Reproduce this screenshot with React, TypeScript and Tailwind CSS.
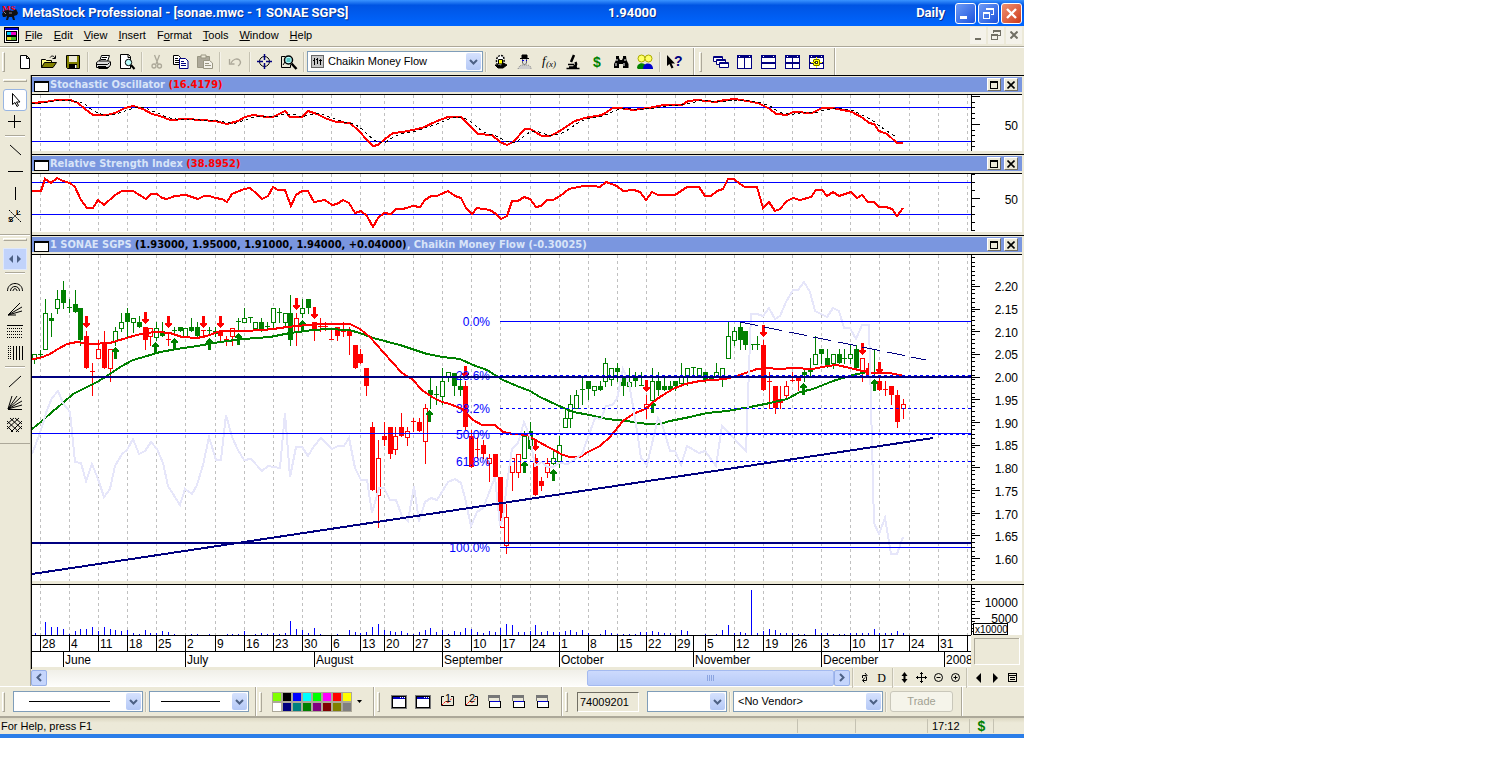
import type { ReactNode } from "react";

type Point = [number, number];
// x, high, body top, body bottom, low, kind (g/r hollow, G/R filled)
type Candle = [number, number, number, number, number, string];

const GRID = [
  40, 69, 98, 127, 156, 185, 215, 244, 273, 302, 331, 360, 384, 413, 442, 471, 500, 530, 559, 588, 617, 646, 675, 705,
  734, 763, 792, 821, 850, 879, 909, 938, 967,
];

const DAYS = [
  "28", "4", "11", "18", "25", "2", "9", "16", "23", "30", "6", "13", "20", "27", "3", "10", "17", "24", "1", "8", "15",
  "22", "29", "5", "12", "19", "26", "3", "10", "17", "24", "31",
];

const MONTHS: [number, string][] = [
  [63, "June"],
  [185, "July"],
  [314, "August"],
  [442, "September"],
  [559, "October"],
  [693, "November"],
  [821, "December"],
  [944, "2008"],
];

const STOCHASTIC: Point[] = [
  [32, 103], [45, 102], [57, 100], [70, 100], [78, 103], [85, 109], [93, 115], [107, 115], [115, 113], [125, 108],
  [133, 106], [143, 109], [152, 114], [160, 116], [170, 120], [187, 119], [200, 120], [215, 121], [227, 124],
  [238, 121], [245, 117], [253, 115], [267, 117], [273, 117], [285, 111], [290, 117], [302, 117], [308, 111],
  [317, 114], [327, 119], [337, 122], [350, 123], [359, 131], [367, 140], [373, 146], [378, 145], [385, 139],
  [393, 133], [403, 132], [422, 128], [437, 121], [448, 117], [461, 117], [472, 128], [478, 134], [492, 135],
  [500, 142], [507, 145], [513, 142], [525, 129], [530, 129], [542, 136], [550, 136], [558, 132], [575, 121],
  [585, 118], [590, 117], [602, 115], [613, 108], [620, 108], [633, 110], [648, 108], [664, 105], [682, 105],
  [688, 101], [698, 100], [715, 102], [725, 100], [735, 99], [747, 101], [758, 103], [770, 109], [776, 114],
  [787, 115], [793, 112], [812, 113], [822, 108], [833, 108], [852, 112], [863, 118], [869, 123], [874, 124],
  [879, 131], [887, 134], [897, 143], [903, 143],
];

const RSI: Point[] = [
  [32, 191], [41, 191], [45, 179], [51, 183], [57, 178], [63, 181], [70, 183], [75, 187], [81, 200], [87, 208],
  [93, 208], [98, 200], [104, 205], [115, 195], [122, 191], [133, 191], [146, 199], [151, 194], [157, 194],
  [162, 198], [167, 199], [175, 196], [186, 195], [198, 199], [204, 196], [210, 196], [215, 198], [222, 199],
  [227, 202], [232, 194], [244, 189], [250, 188], [257, 194], [262, 199], [268, 196], [273, 187], [278, 190],
  [285, 190], [291, 206], [296, 195], [302, 191], [308, 191], [314, 202], [325, 200], [332, 205], [337, 204],
  [343, 200], [349, 203], [355, 213], [361, 211], [367, 216], [373, 227], [378, 218], [384, 213], [391, 214],
  [396, 209], [403, 209], [413, 206], [420, 207], [425, 200], [431, 196], [437, 196], [448, 191], [455, 196],
  [461, 198], [466, 208], [472, 214], [477, 208], [490, 210], [496, 214], [501, 219], [507, 216], [512, 201],
  [518, 201], [524, 197], [530, 199], [536, 207], [541, 206], [547, 200], [553, 200], [560, 196], [569, 189],
  [583, 186], [594, 186], [600, 187], [606, 182], [617, 186], [623, 191], [634, 190], [640, 192], [646, 200],
  [652, 192], [658, 195], [675, 195], [681, 191], [687, 187], [699, 187], [705, 196], [711, 196], [717, 191],
  [723, 189], [728, 179], [734, 179], [740, 184], [745, 187], [757, 187], [763, 208], [769, 202], [775, 211],
  [780, 209], [787, 201], [793, 198], [800, 200], [811, 197], [816, 190], [822, 190], [827, 196], [833, 192],
  [839, 196], [851, 192], [857, 198], [862, 195], [868, 202], [874, 202], [879, 207], [886, 207], [892, 209],
  [897, 216], [903, 208],
];

const FAST_MA: Point[] = [
  [32, 359], [40, 358], [50, 354], [58, 349], [67, 344], [77, 342], [90, 344], [110, 343], [120, 340], [133, 336],
  [145, 333], [157, 332], [170, 333], [182, 337], [197, 338], [207, 336], [220, 331], [243, 331], [263, 330],
  [273, 329], [287, 327], [307, 325], [320, 324], [350, 324], [360, 329], [370, 337], [383, 352], [393, 363],
  [402, 373], [412, 379], [422, 390], [432, 397], [442, 402], [450, 404], [462, 409], [473, 420], [482, 425],
  [495, 425], [503, 432], [513, 434], [527, 435], [537, 441], [550, 448], [563, 455], [570, 457], [580, 457],
  [588, 452], [600, 446], [610, 437], [623, 421], [633, 414], [645, 409], [657, 399], [663, 395], [673, 389],
  [685, 384], [700, 381], [725, 379], [740, 375], [757, 369], [765, 368], [780, 369], [793, 368], [813, 369],
  [827, 366], [837, 365], [850, 368], [863, 371], [873, 373], [890, 373], [904, 376],
];

const SLOW_MA: Point[] = [
  [32, 429], [42, 421], [52, 412], [63, 403], [73, 394], [85, 388], [97, 382], [110, 374], [120, 367], [133, 360],
  [147, 356], [160, 352], [177, 349], [197, 346], [220, 342], [243, 339], [270, 337], [290, 333], [313, 330],
  [327, 329], [349, 330], [360, 333], [373, 338], [400, 345], [427, 354], [443, 357], [460, 359], [473, 365],
  [487, 370], [503, 380], [517, 386], [530, 391], [540, 397], [557, 405], [573, 412], [590, 415], [607, 419],
  [627, 421], [647, 424], [660, 424], [670, 421], [690, 417], [707, 413], [727, 411], [750, 407], [770, 403],
  [787, 399], [800, 392], [813, 389], [833, 381], [853, 375], [867, 372],
];

const MONEY_FLOW: Point[] = [
  [32, 454], [40, 433], [47, 410], [52, 398], [58, 391], [63, 403], [70, 412], [75, 462], [81, 463], [86, 481],
  [92, 464], [98, 479], [104, 497], [110, 489], [115, 466], [122, 454], [127, 450], [133, 439], [139, 454],
  [145, 451], [151, 442], [157, 449], [163, 463], [168, 486], [180, 505], [185, 489], [192, 494], [197, 485],
  [203, 465], [209, 437], [216, 460], [221, 460], [226, 415], [232, 437], [238, 450], [244, 460], [251, 459],
  [262, 471], [268, 466], [280, 468], [285, 413], [290, 477], [296, 447], [302, 447], [308, 456], [314, 446],
  [321, 438], [332, 449], [338, 446], [344, 446], [349, 438], [355, 468], [361, 480], [367, 480], [372, 513],
  [379, 488], [384, 488], [390, 500], [396, 500], [402, 516], [408, 521], [414, 486], [419, 522], [425, 502],
  [431, 498], [437, 500], [448, 482], [455, 479], [461, 483], [465, 498], [471, 526], [477, 512], [483, 508],
  [489, 493], [495, 477], [500, 526], [503, 517], [507, 483], [512, 449], [518, 443], [524, 422], [530, 437],
  [535, 466], [542, 462], [547, 467], [553, 467], [559, 463], [568, 464], [582, 454], [595, 418], [601, 419],
  [606, 406], [612, 405], [617, 399], [623, 369], [629, 383], [635, 418], [641, 458], [647, 465], [658, 418],
  [663, 427], [670, 451], [675, 451], [681, 465], [687, 446], [699, 453], [705, 451], [716, 466], [722, 426],
  [746, 451], [751, 314], [757, 314], [763, 316], [769, 308], [775, 319], [780, 316], [786, 302], [793, 290],
  [798, 290], [804, 282], [810, 292], [815, 311], [827, 317], [833, 308], [839, 311], [844, 328], [850, 328],
  [856, 339], [862, 325], [869, 325], [874, 523], [879, 534], [885, 518], [891, 554], [897, 554], [903, 537],
];

const CANDLES: Candle[] = [
  [34, 354, 354, 359, 363, "g"], [40, 350, 354, 354, 357, "g"], [45, 299, 313, 349, 349, "g"],
  [51, 313, 318, 321, 336, "G"], [57, 290, 299, 308, 313, "g"], [63, 281, 290, 303, 308, "G"],
  [69, 299, 307, 307, 312, "g"], [75, 290, 304, 312, 312, "G"], [80, 308, 308, 340, 345, "G"],
  [86, 331, 336, 368, 368, "R"], [92, 363, 371, 371, 395, "r"], [98, 340, 349, 358, 358, "r"],
  [104, 331, 344, 368, 368, "R"], [110, 349, 349, 368, 381, "r"], [115, 327, 331, 341, 345, "g"],
  [121, 313, 322, 328, 331, "g"], [127, 308, 313, 322, 336, "G"], [133, 318, 318, 322, 332, "g"],
  [139, 316, 322, 327, 327, "G"], [145, 327, 327, 340, 349, "R"], [150, 328, 328, 336, 345, "r"],
  [156, 322, 328, 337, 340, "g"], [162, 322, 331, 336, 336, "G"], [168, 333, 339, 339, 345, "r"],
  [174, 327, 330, 330, 333, "g"], [180, 327, 327, 331, 331, "G"], [185, 328, 328, 337, 337, "g"],
  [191, 318, 327, 331, 331, "G"], [197, 322, 327, 336, 336, "G"], [203, 330, 330, 330, 336, "r"],
  [209, 327, 330, 330, 333, "g"], [215, 327, 331, 334, 336, "G"], [220, 331, 331, 336, 340, "R"],
  [226, 336, 339, 339, 345, "r"], [232, 328, 328, 336, 345, "r"], [238, 318, 321, 321, 331, "g"],
  [244, 308, 318, 322, 322, "g"], [250, 317, 317, 317, 322, "g"], [255, 322, 322, 328, 328, "g"],
  [261, 318, 322, 329, 331, "G"], [267, 322, 326, 326, 329, "g"], [273, 308, 308, 322, 327, "g"],
  [279, 308, 312, 312, 322, "g"], [285, 313, 313, 322, 327, "g"], [290, 295, 313, 340, 345, "G"],
  [296, 313, 318, 331, 345, "r"], [302, 299, 308, 313, 317, "g"], [308, 299, 299, 308, 313, "G"],
  [314, 322, 322, 329, 340, "R"], [320, 318, 326, 326, 331, "r"], [325, 322, 326, 326, 330, "r"],
  [331, 330, 339, 339, 339, "r"], [337, 327, 327, 336, 340, "R"], [343, 322, 331, 331, 336, "r"],
  [349, 327, 331, 336, 354, "R"], [355, 345, 345, 368, 368, "R"], [360, 349, 354, 363, 363, "R"],
  [366, 368, 368, 386, 395, "R"], [372, 422, 427, 490, 490, "R"], [378, 440, 458, 495, 527, "r"],
  [384, 422, 436, 440, 445, "R"], [390, 427, 427, 454, 458, "R"], [395, 427, 436, 449, 454, "r"],
  [401, 413, 427, 436, 436, "R"], [407, 427, 431, 437, 445, "r"], [413, 418, 421, 421, 431, "r"],
  [419, 418, 422, 431, 431, "R"], [425, 404, 408, 441, 463, "r"], [430, 377, 390, 395, 408, "G"],
  [436, 386, 394, 394, 404, "g"], [442, 368, 381, 396, 404, "g"], [448, 372, 372, 377, 381, "g"],
  [454, 373, 373, 386, 395, "G"], [460, 377, 386, 390, 395, "G"], [465, 381, 386, 427, 430, "R"],
  [471, 430, 436, 467, 467, "R"], [477, 437, 449, 449, 458, "r"], [483, 440, 445, 454, 458, "R"],
  [489, 454, 458, 463, 481, "r"], [495, 454, 454, 477, 477, "R"], [502, 517, 517, 527, 527, "r"],
  [500, 477, 477, 517, 527, "R"], [506, 504, 517, 545, 553, "r"], [512, 458, 458, 472, 490, "r"],
  [518, 454, 454, 472, 477, "r"], [524, 431, 436, 458, 458, "g"], [530, 422, 431, 449, 449, "G"],
  [535, 454, 458, 495, 495, "R"], [541, 477, 481, 486, 490, "R"], [547, 458, 463, 472, 477, "r"],
  [553, 449, 458, 463, 467, "g"], [559, 436, 445, 461, 467, "g"], [565, 409, 418, 427, 427, "g"],
  [570, 395, 404, 418, 427, "g"], [576, 390, 395, 408, 408, "g"], [582, 378, 389, 389, 404, "g"],
  [588, 381, 381, 389, 399, "G"], [594, 386, 386, 390, 395, "g"], [600, 381, 386, 390, 390, "G"],
  [605, 358, 363, 381, 386, "g"], [611, 368, 368, 379, 385, "g"], [617, 363, 368, 372, 381, "G"],
  [623, 378, 378, 386, 395, "G"], [629, 368, 382, 386, 386, "g"], [635, 372, 377, 381, 386, "G"],
  [641, 372, 385, 385, 385, "g"], [646, 395, 404, 408, 418, "r"], [652, 368, 381, 400, 400, "g"],
  [658, 372, 381, 390, 395, "G"], [664, 377, 386, 390, 390, "G"], [670, 381, 386, 390, 391, "G"],
  [675, 381, 381, 386, 390, "G"], [681, 363, 377, 383, 386, "g"], [687, 368, 368, 376, 385, "g"],
  [693, 367, 367, 367, 376, "g"], [699, 368, 368, 375, 375, "g"], [705, 372, 372, 380, 382, "G"],
  [711, 376, 376, 379, 379, "G"], [716, 363, 372, 376, 376, "g"], [722, 368, 368, 378, 386, "g"],
  [728, 322, 336, 358, 358, "g"], [734, 327, 331, 340, 345, "g"], [740, 322, 327, 340, 349, "G"],
  [745, 331, 331, 345, 349, "G"], [752, 344, 344, 344, 349, "g"], [757, 336, 344, 344, 349, "g"],
  [763, 340, 345, 390, 390, "R"], [769, 372, 381, 381, 408, "r"], [775, 386, 386, 408, 413, "R"],
  [780, 386, 399, 403, 408, "R"], [786, 381, 386, 395, 398, "r"], [792, 372, 380, 380, 381, "r"],
  [798, 377, 377, 381, 390, "R"], [804, 370, 372, 375, 381, "G"], [810, 358, 370, 372, 376, "G"],
  [815, 336, 354, 364, 364, "g"], [821, 349, 349, 354, 363, "G"], [827, 349, 358, 367, 367, "G"],
  [833, 354, 354, 363, 368, "g"], [839, 349, 354, 363, 363, "G"], [844, 349, 358, 358, 363, "g"],
  [850, 345, 354, 358, 363, "g"], [856, 345, 349, 368, 368, "G"], [862, 358, 358, 372, 381, "r"],
  [868, 363, 368, 377, 377, "R"], [874, 350, 377, 377, 377, "g"], [879, 377, 381, 390, 390, "R"],
  [885, 381, 389, 389, 395, "r"], [891, 386, 386, 395, 404, "R"], [897, 390, 395, 422, 427, "R"],
  [903, 399, 404, 408, 418, "r"],
];

const SELLS: Point[] = [
  [86, 316], [145, 312], [168, 316], [203, 316], [220, 316], [296, 298], [314, 307], [465, 366], [535, 439],
  [646, 380], [763, 325], [862, 343], [879, 362],
];

const BUYS: Point[] = [
  [115, 347], [155, 342], [174, 338], [209, 338], [238, 333], [302, 320], [429, 410], [524, 461], [553, 469],
  [652, 401], [803, 383], [874, 379],
];

const VOLUME: Point[] = [
  [35, 2], [45, 13], [51, 8], [57, 8], [63, 6], [69, 1], [75, 4], [80, 6], [86, 6], [92, 8], [98, 4], [104, 8],
  [110, 6], [115, 5], [121, 4], [127, 5], [133, 2], [139, 1], [145, 5], [150, 2], [156, 2], [162, 4], [168, 3],
  [174, 1], [191, 1], [197, 1], [209, 1], [227, 1], [232, 1], [238, 1], [244, 4], [255, 1], [261, 2], [267, 1],
  [273, 2], [279, 1], [285, 2], [290, 14], [296, 6], [302, 5], [308, 2], [314, 7], [320, 1], [337, 1], [349, 5],
  [355, 3], [360, 2], [366, 3], [372, 8], [378, 11], [384, 5], [390, 4], [395, 3], [401, 4], [407, 2], [413, 1],
  [419, 3], [425, 5], [430, 7], [436, 3], [442, 5], [448, 1], [454, 4], [460, 3], [465, 7], [471, 6], [477, 3],
  [483, 2], [489, 4], [495, 3], [500, 7], [506, 11], [512, 10], [518, 3], [524, 3], [530, 4], [535, 10], [541, 3],
  [547, 4], [553, 3], [559, 3], [565, 4], [570, 5], [576, 3], [582, 5], [588, 2], [600, 1], [605, 5], [611, 2],
  [617, 1], [623, 1], [629, 1], [635, 1], [640, 3], [646, 3], [652, 4], [658, 3], [664, 2], [670, 2], [681, 5],
  [687, 4], [705, 1], [716, 1], [722, 5], [728, 10], [734, 2], [740, 3], [745, 2], [751, 45], [757, 2], [763, 4],
  [769, 6], [775, 5], [780, 2], [786, 2], [792, 2], [798, 1], [804, 1], [815, 6], [821, 2], [827, 2], [833, 1],
  [839, 1], [844, 1], [850, 2], [856, 2], [862, 2], [868, 2], [874, 6], [879, 2], [885, 2], [891, 2], [897, 4],
  [903, 2],
];

const FIB: [number, string, boolean][] = [
  [321, "0.0%", false],
  [375, "23.6%", true],
  [408, "38.2%", true],
  [434, "50.0%", true],
  [461, "61.8%", true],
  [547, "100.0%", false],
];

const PALETTE = [
  "bg-[#80ff00]", "bg-black", "bg-[#0000ff]", "bg-[#00ffff]", "bg-[#00ff00]", "bg-[#ff00ff]", "bg-[#ff0000]",
  "bg-[#ffff00]", "bg-white", "bg-[#000080]", "bg-[#008080]", "bg-[#008000]", "bg-[#800080]", "bg-[#800000]",
  "bg-[#808000]", "bg-[#808080]",
];

const join = (points: Point[]) => points.map((p) => p.join(",")).join(" ");

const valueAt = (points: Point[], x: number) => {
  const i = points.findIndex((p) => p[0] >= x);
  if (i <= 0) return points[0][1];
  const [x0, y0] = points[i - 1];
  const [x1, y1] = points[i];
  return y0 + ((y1 - y0) * (x - x0)) / (x1 - x0);
};

// three-period average, drawn as the dashed %D line
const signalLine = (points: Point[]): Point[] => {
  const out: Point[] = [];
  for (let x = 32; x <= 901; x += 6) {
    out.push([x, Math.round((valueAt(points, x) + valueAt(points, x - 6) + valueAt(points, x - 12)) / 3)]);
  }
  return out;
};

function Plot({ top, height, className, children }: { top: number; height: number; className: string; children: ReactNode }) {
  return (
    <svg
      viewBox={`32 ${top} 990 ${height}`}
      preserveAspectRatio="none"
      shapeRendering="crispEdges"
      className={`block w-full bg-white text-[12px] ${className}`}
    >
      {children}
    </svg>
  );
}

function Grid({ top, bottom }: { top: number; bottom: number }) {
  return (
    <g stroke="#c0c0c0" strokeDasharray="3 3">
      {GRID.map((x) => (
        <line key={x} x1={x + 0.5} x2={x + 0.5} y1={top} y2={bottom} />
      ))}
    </g>
  );
}

function Scale({ top, bottom, major, minor }: { top: number; bottom: number; major: number[]; minor: number[] }) {
  return (
    <g fill="#000">
      <rect x="971" y={top} width="1" height={bottom - top} />
      {minor.map((y) => (
        <rect key={y} x="972" y={y} width="3" height="1" />
      ))}
      {major.map((y) => (
        <rect key={y} x="972" y={y} width="8" height="1" />
      ))}
    </g>
  );
}

function Panel({ title, children }: { title: ReactNode; children: ReactNode }) {
  return (
    <section className="border-t border-l border-black bg-[#ece9d8] pr-0.5 pb-[3px]">
      <header className="flex h-[19px] items-start border-b border-black">
        <div className="flex h-[17px] w-full items-center border-y border-[#ece9d8] bg-[#7a96df] pr-1 pl-0.5">
          <span className="mt-1 h-[11px] w-[15px] shrink-0 border border-t-2 border-black bg-white" />
          <h2 className="ml-px grow truncate text-[11px] leading-[15px] font-bold text-[#d8e4f8] font-['DejaVu_Sans_Condensed','DejaVu_Sans',sans-serif]">
            {title}
          </h2>
          <button
            aria-label="Maximize panel"
            className="mr-[3px] flex h-[13px] w-3.5 items-center justify-center border border-t-white border-l-white border-[#716f64] bg-[#ece9d8]"
          >
            <span className="h-2 w-2 border border-t-2 border-black" />
          </button>
          <button
            aria-label="Close panel"
            className="flex h-[13px] w-3.5 items-center justify-center border border-t-white border-l-white border-[#716f64] bg-[#ece9d8]"
          >
            <svg viewBox="0 0 8 8" className="h-2 w-2" stroke="#000" strokeWidth="1.6">
              <path d="M0.5 0.5l7 7M7.5 0.5l-7 7" />
            </svg>
          </button>
        </div>
      </header>
      {children}
    </section>
  );
}

function StochasticChart() {
  return (
    <Plot top={95} height={56} className="h-14">
      <Grid top={95} bottom={151} />
      <rect x="32" y="107" width="939" height="1" fill="#00f" />
      <rect x="32" y="141" width="939" height="1" fill="#00f" />
      <polyline points={join(STOCHASTIC)} fill="none" stroke="#f00" strokeWidth="2" />
      <polyline points={join(signalLine(STOCHASTIC))} fill="none" stroke="#000" strokeDasharray="3 3" />
      <Scale top={95} bottom={151} major={[96, 124]} minor={[102, 107, 113, 118, 130, 135, 141, 146]} />
      <text x="1018" y="130" textAnchor="end">50</text>
    </Plot>
  );
}

function RsiChart() {
  return (
    <Plot top={174} height={58} className="h-[58px]">
      <Grid top={174} bottom={231} />
      <rect x="32" y="182" width="939" height="1" fill="#00f" />
      <rect x="32" y="214" width="939" height="1" fill="#00f" />
      <polyline points={join(RSI)} fill="none" stroke="#f00" strokeWidth="2" />
      <Scale top={174} bottom={231} major={[198]} minor={[174, 182, 190, 206, 214, 222, 230]} />
      <text x="1018" y="204" textAnchor="end">50</text>
    </Plot>
  );
}

function CandleMark({ data: [x, high, top, bottom, low, kind] }: { data: Candle }) {
  const color = kind.toLowerCase() === "g" ? "#008000" : "#f00";
  if (top === bottom) {
    return (
      <g fill={color}>
        <rect x={x} y={high} width="1" height={low - high + 1} />
        <rect x={x - 2} y={top} width="5" height="1" />
      </g>
    );
  }
  return (
    <g fill={color}>
      <rect x={x} y={high} width="1" height={low - high + 1} />
      {kind === kind.toUpperCase() ? (
        <rect x={x - 2} y={top} width="5" height={bottom - top} />
      ) : (
        <rect x={x - 1.5} y={top + 0.5} width="4" height={bottom - top} fill="#fff" stroke={color} />
      )}
    </g>
  );
}

function PriceChart() {
  const ticks = Array.from({ length: 72 }, (_, i) => Math.round(257 + i * 4.53)).filter((y) => y < 580);
  const labels = Array.from({ length: 13 }, (_, i) => i);
  return (
    <Plot top={255} height={326} className="h-[326px]">
      <Grid top={255} bottom={581} />
      {CANDLES.map((c) => (
        <CandleMark key={c[0]} data={c} />
      ))}
      {SELLS.map(([x, y]) => (
        <path key={x} d={`M${x - 1} ${y}h3v7h2v1l-3.5 4l-3.5 -4v-1h2z`} fill="#f00" />
      ))}
      {BUYS.map(([x, y]) => (
        <path key={x} d={`M${x - 1} ${y + 12}h3v-7h2v-1l-3.5 -4l-3.5 4v1h2z`} fill="#008000" />
      ))}
      {FIB.map(([y, label]) => (
        <text key={label} x="490" y={y + 5} textAnchor="end" fill="#00f">
          {label}
        </text>
      ))}
      <g fill="none" strokeWidth="2">
        <polyline points={join(SLOW_MA)} stroke="#008000" />
        <polyline points={join(FAST_MA)} stroke="#f00" />
        <polyline points={join(MONEY_FLOW)} stroke="#e6e6fa" />
      </g>
      {FIB.map(([y, label, dashed]) => (
        <line key={label} x1="500" x2="971" y1={y + 0.5} y2={y + 0.5} stroke="#00f" strokeDasharray={dashed ? "3 3" : undefined} />
      ))}
      <rect x="32" y="433" width="939" height="1" fill="#00f" />
      <rect x="32" y="376" width="939" height="2" fill="#000080" />
      <rect x="32" y="542" width="939" height="2" fill="#000080" />
      <line x1="32" y1="574" x2="933" y2="438" stroke="#000080" strokeWidth="2" />
      <line x1="740" y1="322" x2="926" y2="360" stroke="#000080" strokeDasharray="18 7" />
      <Scale top={255} bottom={581} major={labels.map((i) => Math.round(286 + i * 22.67))} minor={ticks} />
      {labels.map((i) => (
        <text key={i} x="1018" y={Math.round(291 + i * 22.75)} textAnchor="end">
          {(2.2 - i * 0.05).toFixed(2)}
        </text>
      ))}
    </Plot>
  );
}

function VolumeChart() {
  return (
    <Plot top={585} height={84} className="h-[84px]">
      <Grid top={585} bottom={635} />
      {VOLUME.map(([x, h]) => (
        <rect key={x} x={x} y={635 - h} width="1" height={h} fill="#00f" />
      ))}
      <Scale top={585} bottom={635} major={[601, 618]} minor={[588, 591, 594, 598, 604, 608, 611, 614, 621, 624, 628, 631]} />
      <text x="1018" y="607" textAnchor="end">10000</text>
      <text x="1018" y="623" textAnchor="end">5000</text>
      <rect x="973.5" y="623.5" width="34" height="11" fill="#fff" stroke="#000" />
      <text x="975" y="633" className="text-[10px]">x10000</text>
      <rect x="32" y="635" width="940" height="1" />
      <rect x="32" y="651" width="940" height="1" />
      {DAYS.map((day, i) => (
        <g key={GRID[i]}>
          <rect x={GRID[i]} y="636" width="1" height="15" />
          <text x={GRID[i] + 2} y="648">{day}</text>
        </g>
      ))}
      <rect x="967" y="636" width="1" height="15" />
      <rect x="693" y="636" width="1" height="15" />
      {MONTHS.map(([x, label]) => (
        <g key={label}>
          <rect x={x} y="652" width="1" height="15" />
          <text x={x + 2} y="664">{label}</text>
        </g>
      ))}
      <rect x="32" y="667" width="990" height="2" fill="#ece9d8" />
      <rect x="971" y="635" width="51" height="34" fill="#ece9d8" />
      <path d="M974.5 664V638.5H1019" fill="none" stroke="#aca899" />
      <path d="M974.5 664.5H1019.5V638" fill="none" stroke="#fff" />
    </Plot>
  );
}

function Icon({ children }: { children: ReactNode }) {
  return (
    <svg viewBox="0 0 16 16" className="h-4 w-4 overflow-visible" fill="none" stroke="#000" aria-hidden="true">
      {children}
    </svg>
  );
}

function ToolButton({ label, children }: { label: string; children: ReactNode }) {
  return (
    <button aria-label={label} className="flex h-[22px] w-6 shrink-0 items-center justify-center">
      <Icon>{children}</Icon>
    </button>
  );
}

const Sep = () => <span className="mx-[2px] h-5 w-0.5 shrink-0 border-l border-[#c5c2b2] bg-[#f5f3ea]" />;
const HSep = () => <span className="my-0.5 h-0.5 w-5 border-t border-[#aca899] bg-white" />;
const Grip = () => <span className="h-5 w-[3px] shrink-0 border border-[#aca899] border-t-white border-l-white" />;
const Edge = () => <span className="h-full w-0.5 shrink-0 border-l border-[#aca899] bg-white" />;

function ComboArrow() {
  return (
    <span className="pointer-events-none absolute inset-y-0.5 right-0.5 flex w-[15px] items-center justify-center rounded-xs bg-linear-to-b from-[#d6e2fd] to-[#b4c8f6]">
      <svg viewBox="0 0 9 6" className="h-1.5 w-[9px]" fill="none" stroke="#4d6185" strokeWidth="2">
        <path d="M1 1l3.5 3.5L8 1" />
      </svg>
    </span>
  );
}

function Combo({ label, value, className, children }: { label: string; value?: string; className: string; children?: ReactNode }) {
  return (
    <span className={`relative h-[21px] shrink-0 ${className}`}>
      <select aria-label={label} className="h-full w-full appearance-none border border-[#7f9db9] bg-white pl-1 text-[11px] text-black">
        <option>{value}</option>
      </select>
      {children}
      <ComboArrow />
    </span>
  );
}

const WindowIcon = ({ children }: { children?: ReactNode }) => (
  <g stroke="none" shapeRendering="crispEdges">
    <path d="M0 1h15v14h-15z" fill="#000080" />
    <path d="M1 4h13v10h-13z" fill="#fff" />
    <path d="M2 2h1v1h-1zM12 2h1v1h-1z" fill="#fff" />
    {children}
  </g>
);

function TitleBar() {
  return (
    <header className="flex h-[26px] items-center gap-0.5 bg-linear-to-b from-[#3a93ff] via-[#0054e3] via-20% to-[#0066ff] pr-0.5 pl-0.5 font-bold text-white font-[Roboto,sans-serif]">
      <svg viewBox="0 0 16 16" className="h-4 w-4 shrink-0" aria-hidden="true">
        <text x="0" y="7" fill="#f00" className="text-[9px] font-bold font-['Liberation_Serif',serif]">MS</text>
        <path d="M0 9l2-3 3-1 6 1 3-2 2 4-1 2-3 1 1 4h-2l-1-3-3 0-1 3-2 0 1-4-2 1-2 0z" fill="#111" />
        <path d="M2 7l2 2M7 8h3" stroke="#888" />
      </svg>
      <h1 className="w-[586px] shrink text-[13px] leading-4 whitespace-nowrap [text-shadow:1px_1px_#0a2f8a]">
        <span className="ml-0.5">MetaStock Professional - [sonae.mwc - 1 SONAE SGPS]</span>
      </h1>
      <span className="text-[13px] leading-4 [text-shadow:1px_1px_#0a2f8a]">1.94000</span>
      <span className="ml-auto pr-2 text-[13px] leading-4 [text-shadow:1px_1px_#0a2f8a]">Daily</span>
      <button aria-label="Minimize" className="h-[21px] w-[21px] rounded-[3px] border border-white bg-linear-to-br from-[#6f9bf5] to-[#1c50dc]">
        <svg viewBox="0 0 19 19" className="h-full w-full"><path d="M4 12h7v3H4z" fill="#fff" /></svg>
      </button>
      <button aria-label="Restore" className="h-[21px] w-[21px] rounded-[3px] border border-white bg-linear-to-br from-[#6f9bf5] to-[#1c50dc]">
        <svg viewBox="0 0 19 19" className="h-full w-full" fill="none" stroke="#fff" shapeRendering="crispEdges">
          <path d="M7.5 6V4.5h7v6H12M7 5h8M4.5 8.5h6v6h-6zM4 9h7" />
        </svg>
      </button>
      <button aria-label="Close" className="h-[21px] w-[21px] rounded-[3px] border border-white bg-linear-to-br from-[#f09070] to-[#cc3714]">
        <svg viewBox="0 0 19 19" className="h-full w-full" stroke="#fff" strokeWidth="2.4"><path d="M5 5l9 9M14 5l-9 9" /></svg>
      </button>
    </header>
  );
}

function MenuBar() {
  return (
    <nav className="flex h-[21px] items-center gap-[11px] border-b border-[#aca899] pr-0.5 pb-0.5 pl-1">
      <svg viewBox="0 0 15 16" className="-mr-[5px] h-4 w-[15px] shrink-0" shapeRendering="crispEdges" aria-hidden="true">
        <path d="M0 0h15v16H0z" />
        <path d="M1 1h13v2H1z" fill="#00c" />
        <path d="M1 3h13v12H1z" fill="#fff" />
        <path d="M2 4h11v10H2z" />
        <path d="M3 5h4v3H3z" fill="#0cf" />
        <path d="M7 5h5v3H7z" fill="#e0c" />
        <path d="M3 10h4v3H3z" fill="#dd2" />
        <path d="M7 10h5v3H7z" fill="#4b2" />
      </svg>
      {["File", "Edit", "View", "Insert", "Format", "Tools", "Window", "Help"].map((item) => {
        const at = item === "Format" ? 1 : 0;
        return (
          <button key={item} className="text-[11px] leading-4">
            {item.slice(0, at)}
            <u>{item[at]}</u>
            {item.slice(at + 1)}
          </button>
        );
      })}
      <div className="ml-auto flex gap-0.5">
        <button aria-label="Minimize chart" className="flex h-[17px] w-4 items-end justify-center bg-[#f4f2ea] pb-1">
          <span className="h-0.5 w-1.5 bg-[#716f64]" />
        </button>
        <button aria-label="Restore chart" className="flex h-[17px] w-4 items-center justify-center bg-[#f4f2ea]">
          <svg viewBox="0 0 10 10" className="h-2.5 w-2.5" fill="none" stroke="#716f64" shapeRendering="crispEdges">
            <path d="M2.5 3V0.5h7v5H7M2 1.5h8M0.5 4.5h6v5h-6zM0 5.5h7" />
          </svg>
        </button>
        <button aria-label="Close chart" className="flex h-[17px] w-4 items-center justify-center bg-[#f4f2ea]">
          <svg viewBox="0 0 8 8" className="h-2 w-2" stroke="#716f64" strokeWidth="2"><path d="M0.5 0.5l7 7M7.5 0.5l-7 7" /></svg>
        </button>
      </div>
    </nav>
  );
}

function MainToolbar() {
  return (
    <div className="flex h-7 items-center border-t border-white">
      <span className="w-0.5" />
      <Grip />
      <span className="w-2 shrink-0" />
      <ToolButton label="New">
        <path d="M3.5 1.5h6l3 3v10h-9zM9.5 1.5v3h3" fill="#fff" />
      </ToolButton>
      <ToolButton label="Open">
        <path d="M0.500 13.500v-8h4l1 1h5v2" fill="#ff8" />
        <path d="M0.500 13.500l3-5h12l-3.500 5z" fill="#808000" />
        <path d="M9 3.500c1.500-2 3.500-2 5 0.500M14.500 1.500v3h-3" />
      </ToolButton>
      <ToolButton label="Save">
        <path d="M1.500 1.500h13v13h-12l-1-1z" fill="#808000" />
        <path d="M4 2h8v6H4z" fill="#ece9d8" stroke="none" />
        <path d="M4 10h8v4H4z" fill="#000" stroke="none" />
        <path d="M10 11h1.500v3H10z" fill="#fff" stroke="none" />
      </ToolButton>
      <Sep />
      <ToolButton label="Print">
        <path d="M4.500 7.500l2-6h8l-2 6M7 3.500h5M6 5.500h5" fill="#fff" />
        <path d="M1.500 8.500l2-1.500h11l1 1v3l-2 2.500h-12z" fill="#ddd" />
        <path d="M1.500 10.500h11l2-2M3.500 14.500h9l1.500-2M3 12.500h8" />
      </ToolButton>
      <ToolButton label="Print preview">
        <path d="M1.500 0.500h8l2 2v12h-10zM9 0.500v3h3" fill="#fff" />
        <circle cx="9.500" cy="8.500" r="3.200" fill="#bff" />
        <path d="M12 11l3.500 4" strokeWidth="2" />
      </ToolButton>
      <Sep />
      <ToolButton label="Cut">
        <g stroke="#aca899" strokeWidth="1.300">
          <path d="M5.500 1l3.500 9M10.500 1l-3.500 9" />
          <circle cx="5" cy="12" r="2" />
          <circle cx="10.500" cy="12" r="2" />
        </g>
      </ToolButton>
      <ToolButton label="Copy">
        <path d="M0.500 1.500h5l2 2v7h-7z" fill="#fff" />
        <path d="M2 4.500h3M2 6.500h4M2 8.500h4" />
        <path d="M6.500 4.500h6l2.500 2.500v7.500h-8.500z" fill="#fff" stroke="#000080" />
        <path d="M8 7.500h3M8 9.500h5M8 11.500h5" stroke="#000080" />
      </ToolButton>
      <ToolButton label="Paste">
        <path d="M0.500 2.500h12v11h-12z" fill="#aca899" stroke="#999683" />
        <path d="M4 1h5v3H4z" fill="#ece9d8" stroke="#999683" />
        <path d="M6.500 6.500h6l3 2.500v5.500h-9z" fill="#f4f2ea" stroke="#999683" />
        <path d="M8 9.500h4M8 11.500h6" stroke="#999683" />
      </ToolButton>
      <Sep />
      <ToolButton label="Undo">
        <path d="M4 9c2-4 6-5 8.500-3 2 2.500 0.500 5-1.500 6M2.500 5v5h5" stroke="#aca899" strokeWidth="1.300" />
      </ToolButton>
      <Sep />
      <ToolButton label="Crosshair">
        <circle cx="7.500" cy="7.500" r="5" />
        <path d="M7.500 0v6M7.500 9v6M0 7.500h6M9 7.500h6" stroke="#000080" strokeWidth="1.500" />
      </ToolButton>
      <ToolButton label="Zoom in">
        <path d="M0.500 2.500h4M0.500 13.500h9v-3M0.500 2.500v11M2 11l2-3" />
        <circle cx="7.500" cy="6" r="4" fill="#bff" strokeWidth="1.500" />
        <path d="M5.500 5h4M5.500 7h4" stroke="#088" />
        <path d="M10.500 9.500l5 5.500" strokeWidth="2.500" />
      </ToolButton>
      <Sep />
      <span className="relative h-[21px] w-44 shrink-0">
        <select aria-label="Indicator" className="h-full w-full appearance-none border border-[#7f9db9] bg-white pl-5 text-[11px]">
          <option>Chaikin Money Flow</option>
        </select>
        <svg viewBox="0 0 13 13" className="pointer-events-none absolute top-1 left-1 h-[13px] w-[13px]" shapeRendering="crispEdges" fill="none" stroke="#000">
          <path d="M0.500 0.500h12v12h-12z" fill="#c8c8c8" stroke="#666" />
          <path d="M3.500 3v7M6.500 3v6M9.500 4v6M2 5.500h2M5 4.500h2M8 5.500h3" />
        </svg>
        <ComboArrow />
      </span>
      <Sep />
      <ToolButton label="Security">
        <path d="M4.500 11c-2-4-1-9 3-9.500s4 5 3 9" fill="#fff" strokeWidth="1.500" strokeDasharray="2 1" />
        <path d="M5.500 5.500h4v4.500h-4z" fill="#ff0" />
        <path d="M2 11l3 3h5l4-3-4-2-2 3-3-1z" fill="#000" />
      </ToolButton>
      <ToolButton label="Expert advisor">
        <path d="M1 15c1-3 3-4 4-4h5c2 0 4 1 4 4" fill="#ccc" stroke="#888" strokeDasharray="1 1" />
        <path d="M5.500 5v4l2 2 2-2V5" fill="#ddd" stroke="#666" />
        <path d="M5 1h5v3H5z" fill="#000" />
        <path d="M3 4.500h9" />
        <path d="M5 6.500h2M9 6.500h1" stroke="#00c" />
      </ToolButton>
      <ToolButton label="Indicator builder">
        <text x="1" y="11" fill="#000" stroke="none" className="text-[13px] italic font-['Liberation_Serif',serif]">f</text>
        <text x="5" y="13" fill="#000" stroke="none" className="text-[9px] italic font-['Liberation_Serif',serif]">(x)</text>
      </ToolButton>
      <ToolButton label="System tester">
        <path d="M9 1l-3 7M10.500 8c1.500 3 0 4-2 5" strokeWidth="2.500" />
        <path d="M3 10.500h6M1.500 14.500h13M4 13h8" strokeWidth="1.500" />
      </ToolButton>
      <ToolButton label="Quotes">
        <text x="4" y="13" fill="#008000" stroke="none" className="text-[14px] font-bold">$</text>
      </ToolButton>
      <ToolButton label="Explorer">
        <path d="M3 2h3v2l1 2h2l1-2V2h3l0.500 4 2 4v4H10v-4H6v4H1v-4l2-4z" fill="#000" stroke="none" />
        <path d="M4 5v2M3 9v3M12 5v2M11 9v3" stroke="#fff" />
      </ToolButton>
      <ToolButton label="Users">
        <circle cx="4.500" cy="4.500" r="3.500" fill="#ff6" stroke="#aa0" />
        <circle cx="11.500" cy="4.500" r="3.500" fill="#ff6" stroke="#aa0" />
        <path d="M0 14c0-6 8-6 9-2v3H1z" fill="#008000" stroke="none" />
        <path d="M6 15c0-7 9-7 10-1v1z" fill="#00c" stroke="none" />
      </ToolButton>
      <Sep />
      <ToolButton label="Context help">
        <path d="M0 1v11l2.500-2 2 4.500 2-1-2-4h3.500z" fill="#000" stroke="none" />
        <text x="7" y="12" fill="#000080" stroke="none" className="text-[14px] font-bold">?</text>
      </ToolButton>
      <span className="w-1.5 shrink-0" />
      <Edge />
      <span className="w-1 shrink-0" />
      <Grip />
      <span className="w-[7px] shrink-0" />
      <ToolButton label="Cascade">
        <g fill="#fff" stroke="#000080">
          <path d="M0.500 2.500h9v5h-9zM0 3.500h10" />
          <path d="M3.500 5.500h9v5h-9zM3 6.500h10" />
          <path d="M6.500 8.500h9v5h-9zM6 9.500h10" />
        </g>
      </ToolButton>
      <ToolButton label="Tile columns">
        <WindowIcon><path d="M7 1h1v13H7z" fill="#000080" /></WindowIcon>
      </ToolButton>
      <ToolButton label="Tile rows">
        <WindowIcon><path d="M1 8h13v2H1z" fill="#000080" /></WindowIcon>
      </ToolButton>
      <ToolButton label="Tile grid">
        <WindowIcon><path d="M1 8h13v2H1zM7 4h1v10H7z" fill="#000080" /></WindowIcon>
      </ToolButton>
      <ToolButton label="Layout options">
        <WindowIcon>
          <path d="M1 8h13v2H1z" fill="#000080" />
          <circle cx="7.500" cy="8.500" r="3.500" fill="#ff0" stroke="#660" />
          <path d="M7 3h1v2H7zM7 12h1v2H7zM2 8h2v1H2zM11 8h2v1h-2zM4 5h1v1H4zM10 5h1v1h-1zM4 11h1v1H4zM10 11h1v1h-1z" fill="#ff0" />
          <circle cx="7.500" cy="8.500" r="1.500" fill="#fff" stroke="#440" />
        </WindowIcon>
      </ToolButton>
      <span className="w-[5px] shrink-0" />
      <Edge />
    </div>
  );
}

function DrawingTools() {
  return (
    <aside className="flex w-[30px] shrink-0 flex-col items-center">
      <div className="flex w-full flex-col items-center border-b border-[#aca899] pt-1 pb-[7px]">
        <span className="mb-[7px] h-[3px] w-6 border border-[#aca899] border-t-white border-l-white" />
        <button aria-label="Select" className="flex h-[22px] w-6 items-center justify-center rounded-[3px] border border-[#98b5e2] bg-white">
          <Icon><path d="M5.500 1.500v11l2.500-2 2 4 1.500-1-2-3.500h3.500z" fill="#fff" /></Icon>
        </button>
        <ToolButton label="Crosshair cursor"><path d="M7.500 1v13M1 7.500h13" /></ToolButton>
        <HSep />
        <ToolButton label="Trendline"><path d="M3 3l11 10" /></ToolButton>
        <ToolButton label="Horizontal line"><path d="M1 7.500h15" /></ToolButton>
        <ToolButton label="Vertical line"><path d="M8.500 1v13" /></ToolButton>
        <ToolButton label="Stop loss">
          <path d="M2 2l12 12M13 3L3 13" strokeDasharray="2 1" />
          <text x="1" y="14" fill="#000" stroke="none" className="text-[8px] font-bold">S</text>
          <text x="9" y="7" fill="#000" stroke="none" className="text-[8px] font-bold">L</text>
        </ToolButton>
      </div>
      <div className="flex w-full flex-col items-center border-t border-b border-t-white border-b-[#aca899] pt-0.5 pb-[7px]">
        <span className="mb-[7px] h-[3px] w-6 border border-[#aca899] border-t-white border-l-white" />
        <button aria-label="Expand" className="flex h-[22px] w-6 items-center justify-center border border-[#dfe8fb] bg-[#c1d3fb]">
          <svg viewBox="0 0 16 16" className="h-4 w-4" fill="#4d6185"><path d="M6 4v8L2 8zM10 4v8l4-4z" /></svg>
        </button>
        <HSep />
        <ToolButton label="Fibonacci arcs"><path d="M0.500 12c0-10 15-10 15 0M3.500 12c0-6 9-6 9 0M6 12c0-3 4-3 4 0" /></ToolButton>
        <ToolButton label="Fibonacci fan"><path d="M1 14L13 2M1 14L15 6M1 14L15 10M1 14h8" /></ToolButton>
        <ToolButton label="Fibonacci retracement">
          <path d="M0 2.500h16" />
          <path d="M0 5.500h16M0 8.500h16M0 11.500h16M0 14.500h16" strokeDasharray="1 1" />
        </ToolButton>
        <ToolButton label="Fibonacci time zones">
          <path d="M1.500 1v14M3.500 1v14" strokeDasharray="1 1" />
          <path d="M6.500 1v14M9.500 1v14M12.500 1v14M15.500 1v14" />
        </ToolButton>
        <HSep />
        <ToolButton label="Gann line"><path d="M2 14L14 3" /></ToolButton>
        <ToolButton label="Gann fan"><path d="M1 14.500h14M1 14L5 1M1 14L10 1M1 14L14 2M1 14L15 6M1 14L15 10" /></ToolButton>
        <ToolButton label="Gann grid">
          <path d="M0 4l12 11M0 9l6 6M3 1l12 11M8 1l7 6M15 4L4 15M15 9l-6 6M12 1L0 12M7 1L0 7" />
        </ToolButton>
      </div>
    </aside>
  );
}

function ScrollRow() {
  const glyph = "flex h-4 w-[17px] shrink-0 items-center justify-center";
  return (
    <div className="flex h-[17px] items-center">
      <button aria-label="Scroll left" className="flex h-4 w-4 items-center justify-center rounded-xs border border-[#98b0e8] bg-[#c5d5fc]">
        <svg viewBox="0 0 6 9" className="h-[9px] w-1.5" fill="none" stroke="#4d6185" strokeWidth="2"><path d="M5 1L1.500 4.500L5 8" /></svg>
      </button>
      <div className="flex h-4 grow bg-linear-to-b from-[#f0efe8] to-[#fdfdfb]">
        <span className="flex-11" />
        <span className="flex flex-5 items-center justify-center gap-px rounded-xs border border-[#a4baf0] bg-linear-to-b from-[#ccdafd] to-[#b8cbf8]">
          {[0, 1, 2, 3].map((i) => (
            <span key={i} className="h-1.5 w-px bg-[#8ba4e0]" />
          ))}
        </span>
      </div>
      <button aria-label="Scroll right" className="flex h-4 w-4 items-center justify-center rounded-xs border border-[#98b0e8] bg-[#c5d5fc]">
        <svg viewBox="0 0 6 9" className="h-[9px] w-1.5" fill="none" stroke="#4d6185" strokeWidth="2"><path d="M1 1l3.500 3.500L1 8" /></svg>
      </button>
      <Sep />
      <button aria-label="Refresh" className={glyph}>
        <svg viewBox="0 0 9 11" className="h-[11px] w-[9px]" fill="none" stroke="#000"><path d="M2.500 6V3.500h4M5 1l2 2.500-2 2M6.500 5v3.500H3M4.500 6L2.500 8.500l2 2" /></svg>
      </button>
      <button aria-label="Daily" className={`${glyph} text-[12px] font-['Liberation_Serif',serif]`}>D</button>
      <Sep />
      <button aria-label="Fit vertically" className={glyph}>
        <svg viewBox="0 0 9 11" className="h-[11px] w-[9px]"><path d="M4.500 0l3 4h-2v3h2l-3 4-3-4h2V4h-2z" /></svg>
      </button>
      <button aria-label="Fit both" className={glyph}>
        <svg viewBox="0 0 11 11" className="h-[11px] w-[11px]" fill="none" stroke="#000"><path d="M5.500 0v11M0 5.500h11M4 2l1.500-1.500L7 2M4 9l1.500 1.500L7 9M2 4L0.500 5.500L2 7M9 4l1.500 1.500L9 7" /></svg>
      </button>
      <button aria-label="Zoom out" className={glyph}>
        <svg viewBox="0 0 11 11" className="h-[11px] w-[11px]" fill="none" stroke="#000"><circle cx="5.500" cy="5.500" r="4" /><path d="M3.500 5.500h4" /></svg>
      </button>
      <button aria-label="Zoom in chart" className={glyph}>
        <svg viewBox="0 0 11 11" className="h-[11px] w-[11px]" fill="none" stroke="#000"><circle cx="5.500" cy="5.500" r="4" /><path d="M3.500 5.500h4M5.500 3.500v4" /></svg>
      </button>
      <Sep />
      <button aria-label="Previous" className={glyph}>
        <svg viewBox="0 0 5 10" className="h-2.5 w-[5px]"><path d="M5 0v10L0 5z" /></svg>
      </button>
      <button aria-label="Next" className={glyph}>
        <svg viewBox="0 0 5 10" className="h-2.5 w-[5px]"><path d="M0 0v10l5-5z" /></svg>
      </button>
      <button aria-label="Data window" className={glyph}>
        <svg viewBox="0 0 9 10" className="h-2.5 w-[9px]" fill="none" stroke="#000" shapeRendering="crispEdges">
          <path d="M0.500 0.500h8v8h-8zM0 2.500h9M2 4.500h5M2 6.500h5" />
        </svg>
      </button>
      <span className="w-[3px] shrink-0" />
    </div>
  );
}

const ChartWindowIcon = () => (
  <g shapeRendering="crispEdges">
    <path d="M0.500 1.500h15v13h-15z" fill="#fff" stroke="#777" />
    <path d="M1.500 2.500h13v11h-13z" fill="#fff" />
    <path d="M2 3h12v2H2z" fill="#0000c0" stroke="none" />
    <path d="M9 3h1v1H9zM11 3h1v1h-1zM13 3h1v1h-1z" fill="#fff" stroke="none" />
  </g>
);

const StackIcon = () => (
  <g shapeRendering="crispEdges" stroke="none">
    <path d="M1 1h12v3H1zM1 4h1v3H1zM12 4h1v3h-1z" fill="#777" />
    <path d="M2 7h12v7H2z" fill="#000" />
    <path d="M3 7h10v1H3z" fill="#00c" />
    <path d="M3 8h10v5H3z" fill="#fff" />
  </g>
);

function BottomToolbar() {
  return (
    <div className="flex h-[31px] items-center border-y border-t-white border-b-[#aca899]">
      <span className="w-0.5 shrink-0" />
      <Grip />
      <span className="w-2 shrink-0" />
      <Combo label="Line style" className="w-[130px]">
        <span className="pointer-events-none absolute top-2.5 left-4 h-px w-[81px] bg-black" />
      </Combo>
      <Sep />
      <Combo label="Line weight" className="w-[100px]">
        <span className="pointer-events-none absolute top-2.5 left-3 h-px w-[59px] bg-black" />
      </Combo>
      <span className="w-1.5 shrink-0" />
      <Edge />
      <span className="w-0.5 shrink-0" />
      <Grip />
      <div className="ml-2.5 grid shrink-0 grid-cols-8">
        {PALETTE.map((c) => (
          <button key={c} aria-label={`Colour ${c.slice(3)}`} className={`h-2.5 w-2.5 border border-[#aca899] ${c}`} />
        ))}
      </div>
      <button aria-label="More colours" className="ml-[5px] flex h-4 w-3 shrink-0 items-center">
        <svg viewBox="0 0 5 3" className="h-[3px] w-[5px]"><path d="M0 0h5L2.500 3z" /></svg>
      </button>
      <span className="w-1 shrink-0" />
      <Edge />
      <span className="w-0.5 shrink-0" />
      <Grip />
      <span className="w-[7px] shrink-0" />
      <ToolButton label="Chart window"><ChartWindowIcon /></ToolButton>
      <ToolButton label="Second chart window"><ChartWindowIcon /></ToolButton>
      {["1", "2"].map((n) => (
        <ToolButton key={n} label={`Template ${n}`}>
          <path d="M5 2.500H2.500v9h12v-9H12" fill="none" />
          <path d="M3 11l4-4 2 2 4-5" stroke="#f00" strokeDasharray="2 1" />
          <text x="6" y="8" fill="#000" stroke="none" className="text-[11px]">{n}</text>
        </ToolButton>
      ))}
      <ToolButton label="Stack windows"><StackIcon /></ToolButton>
      <ToolButton label="Stack charts"><StackIcon /></ToolButton>
      <ToolButton label="Stack panels"><StackIcon /></ToolButton>
      <span className="w-1.5 shrink-0" />
      <Edge />
      <span className="w-0.5 shrink-0" />
      <Grip />
      <input
        aria-label="Account"
        defaultValue="74009201"
        className="mr-2 ml-[9px] h-5 w-[62px] shrink-0 border border-[#716f64] border-r-white border-b-white bg-[#ece9d8] pl-0.5 text-[11px]"
      />
      <Combo label="Order" className="w-20" />
      <Sep />
      <Combo label="Vendor" value="<No Vendor>" className="w-[150px]" />
      <Sep />
      <button disabled className="ml-px h-[21px] w-[63px] shrink-0 rounded-[3px] border border-[#c9c7ba] bg-[#f5f4ea] text-[11px] text-[#a1a192]">
        Trade
      </button>
      <span className="w-2 shrink-0" />
      <Edge />
    </div>
  );
}

export default function App() {
  return (
    <div className="min-h-screen bg-white">
      <main className="w-full max-w-5xl overflow-hidden bg-[#ece9d8] text-[11px] text-black font-['Liberation_Sans',Arial,sans-serif]">
        <TitleBar />
        <MenuBar />
        <MainToolbar />
        <div className="flex">
          <DrawingTools />
          <div className="min-w-0 grow border-l border-[#aca899]">
            <Panel title={<>Stochastic Oscillator <span className="text-[#ff0000]">(16.4179)</span></>}>
              <StochasticChart />
            </Panel>
            <Panel title={<>Relative Strength Index <span className="text-[#ff0000]">(38.8952)</span></>}>
              <RsiChart />
            </Panel>
            <Panel
              title={
                <>
                  1 SONAE SGPS <span className="text-black">(1.93000, 1.95000, 1.91000, 1.94000, +0.04000)</span>, Chaikin Money
                  Flow (-0.30025)
                </>
              }
            >
              <PriceChart />
            </Panel>
            <section className="border-t border-l border-black bg-[#ece9d8] pr-0.5">
              <VolumeChart />
            </section>
            <ScrollRow />
          </div>
        </div>
        <BottomToolbar />
        <footer className="flex h-[17px] items-center border-t border-[#aca899] bg-linear-to-b from-[#dcd8c2] via-[#ece9d8] via-30% to-[#ece9d8] pl-px">
          <span className="grow text-[11px] leading-4">For Help, press F1</span>
          <span className="h-3.5 w-[58px] border-l border-[#c5c2b2]" />
          <span className="h-3.5 w-[72px] border-l border-[#c5c2b2]" />
          <span className="h-3.5 w-[42px] border-l border-[#c5c2b2] pl-1 leading-[14px]">17:12</span>
          <span className="h-3.5 w-6 border-l border-[#c5c2b2] text-center text-[14px] leading-[14px] font-bold text-[#008000]">$</span>
          <span className="h-3.5 w-[31px] border-l border-[#c5c2b2]" />
        </footer>
        <div className="h-1 bg-[#2a7de8]" />
      </main>
    </div>
  );
}
